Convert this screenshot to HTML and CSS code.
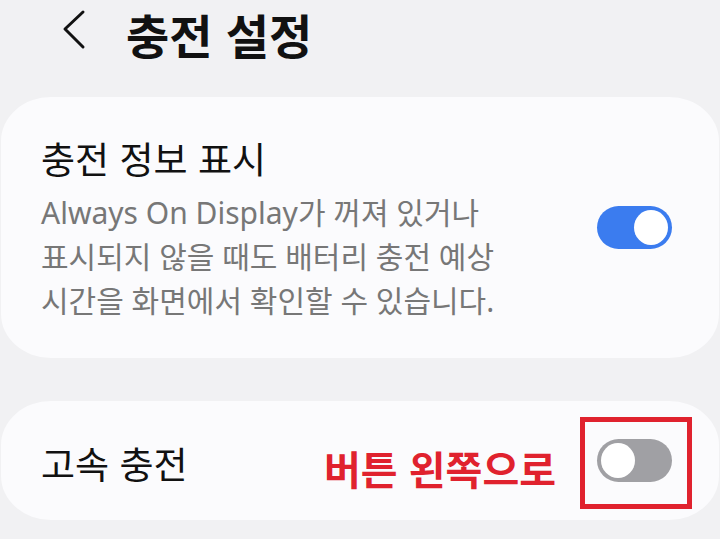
FILE: index.html
```html
<!DOCTYPE html>
<html lang="ko">

<head>
    <meta charset="UTF-8">
    <meta name="viewport" content="width=device-width, initial-scale=1.0">
    <title>충전 설정</title>
    <link rel="stylesheet" href="styles.css">
</head>

<body>
    <header class="top-bar">
        <svg class="back" width="26" height="42" viewBox="0 0 26 42">
            <polyline points="21,3 3,20 21,38" fill="none" stroke="#111" stroke-width="3" stroke-linecap="round" stroke-linejoin="round"/>
        </svg>
        <h1 class="page-title">충전 설정</h1>
    </header>

    <section class="card card-info">
        <div class="card-text">
            <h2 class="item-title">충전 정보 표시</h2>
            <p class="item-desc">Always On Display가 꺼져 있거나<br>표시되지 않을 때도 배터리 충전 예상<br>시간을 화면에서 확인할 수 있습니다.</p>
        </div>
        <div class="switch on"><span class="knob"></span></div>
    </section>

    <section class="card card-fast">
        <h2 class="item-title">고속 충전</h2>
        <span class="note">버튼 왼쪽으로</span>
        <div class="mark">
            <div class="switch off"><span class="knob"></span></div>
        </div>
    </section>
</body>

</html>
```

FILE: styles.css
```css
body {
    margin: 0;
    background-color: #f1f1f3;
    font-family: "Noto Sans", "Noto Sans CJK KR", sans-serif;
    color: #111;
}

.top-bar {
    display: flex;
    align-items: center;
    height: 68px;
    padding-left: 62px;
}

.back {
    margin-top: -8px;
}

.page-title {
    margin: 0 0 0 38px;
    font-family: "Noto Sans CJK KR", sans-serif;
    font-size: 47px;
    font-weight: 700;
    line-height: 68px;
}

.card {
    background-color: #fbfbfd;
    border-radius: 50px / 44px;
    margin: 0 1px;
}

.card-info {
    display: flex;
    align-items: center;
    margin-top: 29px;
    height: 261px;
    padding: 0 47px 0 40px;
    box-sizing: border-box;
}

.card-text {
    flex: 1;
    padding-top: 4px;
}

.item-title {
    margin: 0;
    font-family: "Noto Sans CJK KR", sans-serif;
    font-size: 37px;
    font-weight: 400;
    line-height: 44px;
}

.item-desc {
    margin: 11px 0 0;
    font-size: 30px;
    line-height: 44px;
    color: #777;
}

.switch {
    display: flex;
    align-items: center;
    width: 75px;
    height: 43px;
    padding: 0 4px;
    box-sizing: border-box;
    border-radius: 22px;
}

.switch.on {
    background-color: #3b7cef;
    justify-content: flex-end;
}

.switch.off {
    background-color: #a0a0a4;
    justify-content: flex-start;
}

.knob {
    width: 34px;
    height: 35px;
    border-radius: 50%;
    background-color: #fff;
}

.card-fast {
    display: flex;
    align-items: center;
    margin-top: 43px;
    height: 119px;
    padding: 0 27px 0 40px;
    box-sizing: border-box;
}

.card-fast .item-title {
    margin-top: 4px;
}

.note {
    margin-left: auto;
    margin-right: 24px;
    margin-top: 14px;
    font-family: "Noto Sans CJK KR", sans-serif;
    font-size: 40px;
    font-weight: 700;
    color: #e0222e;
}

.mark {
    border: 5px solid #e0222e;
    padding: 17px 15px 22px 12px;
    margin-top: 4px;
}
```
